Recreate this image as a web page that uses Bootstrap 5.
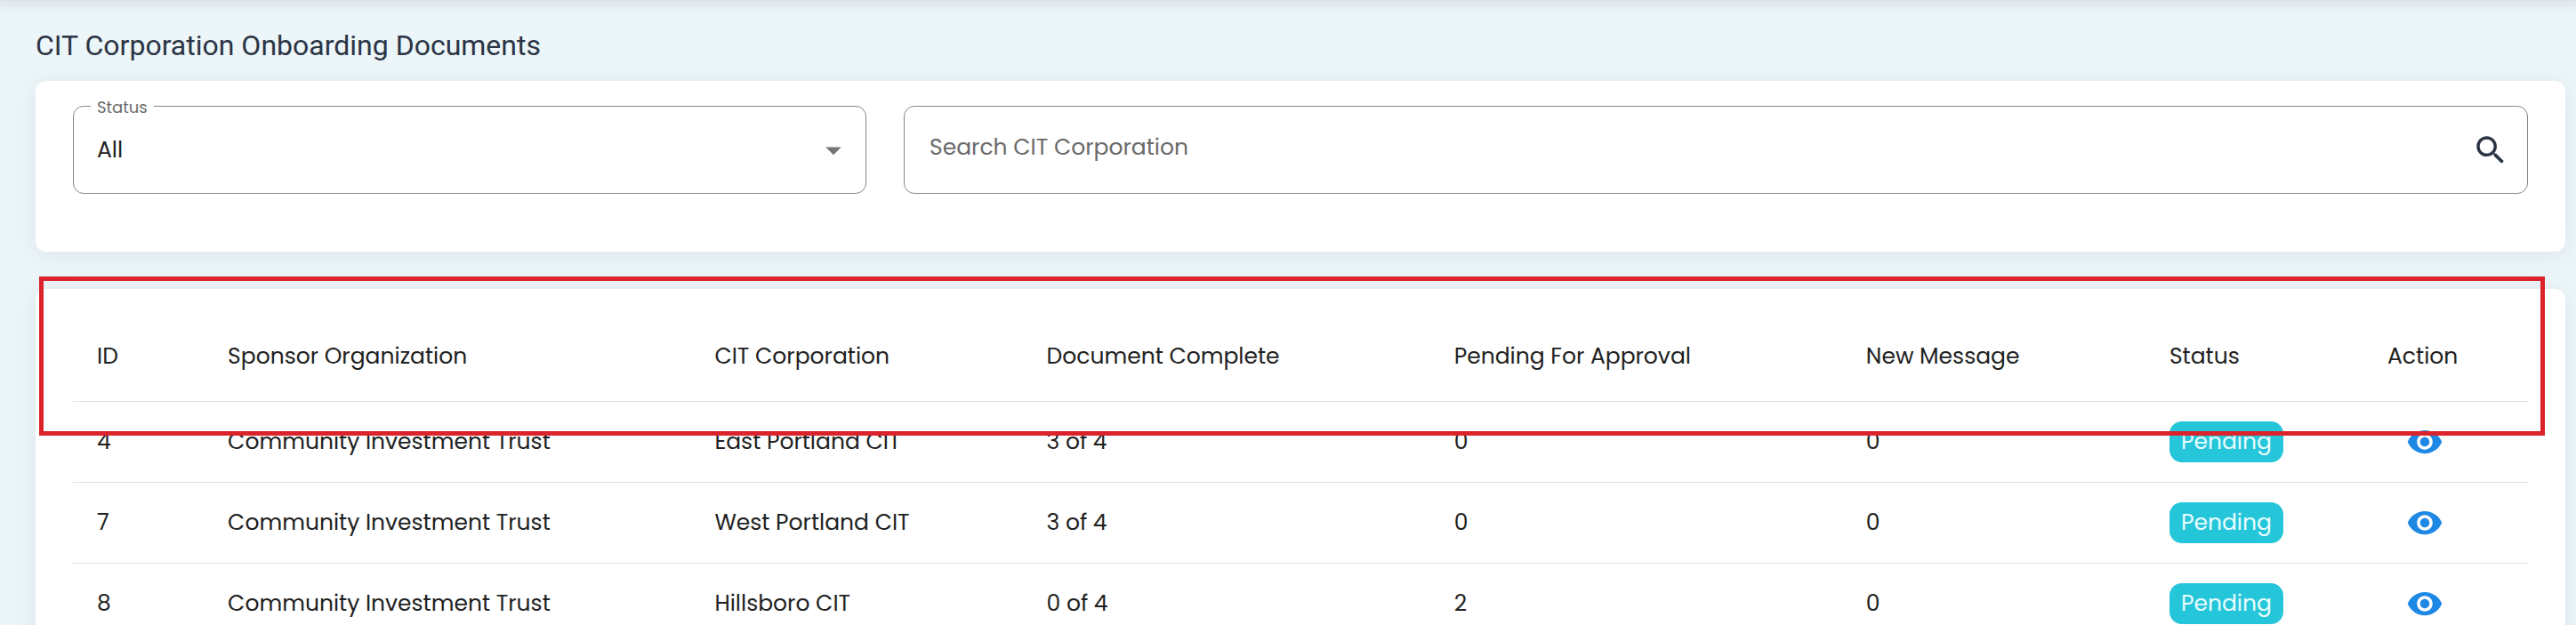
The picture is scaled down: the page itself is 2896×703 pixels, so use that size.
<!DOCTYPE html>
<html lang="en">
<head>
<meta charset="utf-8">
<meta name="viewport" content="width=device-width, initial-scale=1">
<title>CIT Corporation Onboarding Documents</title>
<link href="https://cdn.jsdelivr.net/npm/bootstrap@5.3.0/dist/css/bootstrap.min.css" rel="stylesheet">
<style>
  body {
    background: #ecf5f8;
    color: #212121;
    font-family: Poppins, Inter, "Open Sans", sans-serif;
    font-size: 25px;
    line-height: 36px;
  }
  .top-edge { height: 1px; background: #dbe1e5; box-shadow: 0 0 12px 4px rgba(60, 70, 80, .13); }
  .page-body { padding: 26px 12px 0 40px; }
  .page-title {
    font: 400 32px/48px Roboto, sans-serif;
    color: #2b3445;
    margin-bottom: 16px;
  }
  .panel {
    background: #fff;
    border-radius: 12px;
    box-shadow: 0 4px 28px rgba(90, 105, 115, .1);
    padding-left: 42px;
    padding-right: 42px;
  }
  .filter-panel { padding-top: 28px; padding-bottom: 65px; margin-bottom: 42px; }
  .filter-row { --bs-gutter-x: 42px; }
  .field {
    height: 99px;
    font-size: 25px;
    color: #212121;
    background: #fff;
    border: 1px solid #868686;
    border-radius: 12px;
    padding: 0 80px 0 26px;
    appearance: none;
  }
  .field-search { padding: 0 80px 6px 28px; }
  .field-search::placeholder { color: #6a6a6a; opacity: 1; }
  .field-label {
    top: -12px;
    left: 20px;
    padding: 0 7px;
    background: #fff;
    color: #6a6a6a;
    font-size: 18px;
    line-height: 27px;
  }
  .field-icon { right: 16px; color: #757575; }
  .field-button { right: 21px; color: #2b3445; }
  .glyph { width: 42px; height: 42px; fill: currentColor; display: block; }
  .table-panel { padding-top: 26px; }
  .doc-table { table-layout: fixed; --bs-table-bg: transparent; color: #212121; }
  .doc-table > :not(caption) > * > * {
    padding: 0 0 0 27px;
    height: 91px;
    color: #212121;
    border-bottom: 1px solid #e0e0e0;
    vertical-align: middle;
    font-weight: 400;
    white-space: nowrap;
  }
  .doc-table > thead > tr > th { height: 100px; }
  .status-chip {
    font-size: 25px;
    font-weight: 400;
    line-height: 46px;
    padding: 0 13px;
    border-radius: 14px;
    background: #26c6da;
    color: #e9fdff;
  }
  .view-button { padding: 0; margin-left: 21px; color: #1e88e5; }
  .header-highlight {
    top: -14px;
    left: 4px;
    right: 23px;
    height: 179px;
    border: 5px solid #dc232b;
    pointer-events: none;
  }
</style>
</head>
<body class="vh-100 overflow-hidden d-flex flex-column">
<div class="top-edge flex-shrink-0"></div>
<main class="page-body flex-grow-1">
  <h1 class="page-title">CIT Corporation Onboarding Documents</h1>

  <section class="panel filter-panel">
    <form class="row filter-row">
      <div class="col-4">
        <div class="position-relative d-flex align-items-center">
          <select id="status" class="field w-100">
            <option>All</option>
            <option>Pending</option>
          </select>
          <label for="status" class="field-label position-absolute">Status</label>
          <span class="field-icon position-absolute pe-none">
            <svg class="glyph" viewBox="0 0 24 24" aria-hidden="true"><path d="M7 10l5 5 5-5z"/></svg>
          </span>
        </div>
      </div>
      <div class="col-8">
        <div class="position-relative d-flex align-items-center">
          <input id="search" type="text" class="field field-search w-100" placeholder="Search CIT Corporation" aria-label="Search CIT Corporation">
          <button type="button" class="btn p-0 border-0 field-button position-absolute" aria-label="Search">
            <svg class="glyph" viewBox="0 0 24 24" aria-hidden="true"><path d="M15.5 14h-.79l-.28-.27C15.41 12.59 16 11.11 16 9.5 16 5.91 13.09 3 9.5 3S3 5.91 3 9.5 5.91 16 9.5 16c1.61 0 3.09-.59 4.23-1.57l.27.28v.79l5 4.99L20.49 19l-4.99-5zm-6 0C7.01 14 5 11.99 5 9.5S7.01 5 9.5 5 14 7.01 14 9.5 11.99 14 9.5 14z"/></svg>
          </button>
        </div>
      </div>
    </form>
  </section>

  <svg class="d-none" aria-hidden="true">
    <symbol id="eye" viewBox="0 0 24 24"><path d="M12 4.5C7 4.5 2.73 7.61 1 12c1.730 4.390 6 7.500 11 7.500s9.270-3.110 11-7.500c-1.730-4.390-6-7.500-11-7.500zM12 17c-2.760 0-5-2.240-5-5s2.240-5 5-5 5 2.240 5 5-2.240 5-5 5zm0-8c-1.660 0-3 1.340-3 3s1.340 3 3 3 3-1.340 3-3-1.340-3-3-3z"/></symbol>
  </svg>

  <section class="panel table-panel position-relative">
    <table class="table doc-table mb-0">
      <colgroup>
        <col style="width:5.33%"><col style="width:19.83%"><col style="width:13.52%"><col style="width:16.6%">
        <col style="width:16.78%"><col style="width:12.36%"><col style="width:8.88%"><col style="width:6.7%">
      </colgroup>
      <thead>
        <tr>
          <th scope="col">ID</th>
          <th scope="col">Sponsor Organization</th>
          <th scope="col">CIT Corporation</th>
          <th scope="col">Document Complete</th>
          <th scope="col">Pending For Approval</th>
          <th scope="col">New Message</th>
          <th scope="col">Status</th>
          <th scope="col">Action</th>
        </tr>
      </thead>
      <tbody>
        <tr>
          <td>4</td><td>Community Investment Trust</td><td>East Portland CIT</td><td>3 of 4</td><td>0</td><td>0</td>
          <td><span class="badge status-chip">Pending</span></td>
          <td><button type="button" class="btn border-0 view-button" aria-label="View"><svg class="glyph"><use href="#eye"/></svg></button></td>
        </tr>
        <tr>
          <td>7</td><td>Community Investment Trust</td><td>West Portland CIT</td><td>3 of 4</td><td>0</td><td>0</td>
          <td><span class="badge status-chip">Pending</span></td>
          <td><button type="button" class="btn border-0 view-button" aria-label="View"><svg class="glyph"><use href="#eye"/></svg></button></td>
        </tr>
        <tr>
          <td>8</td><td>Community Investment Trust</td><td>Hillsboro CIT</td><td>0 of 4</td><td>2</td><td>0</td>
          <td><span class="badge status-chip">Pending</span></td>
          <td><button type="button" class="btn border-0 view-button" aria-label="View"><svg class="glyph"><use href="#eye"/></svg></button></td>
        </tr>
      </tbody>
    </table>
    <div class="header-highlight position-absolute"></div>
  </section>
</main>
<script src="https://cdn.jsdelivr.net/npm/bootstrap@5.3.0/dist/js/bootstrap.bundle.min.js"></script>
</body>
</html>
